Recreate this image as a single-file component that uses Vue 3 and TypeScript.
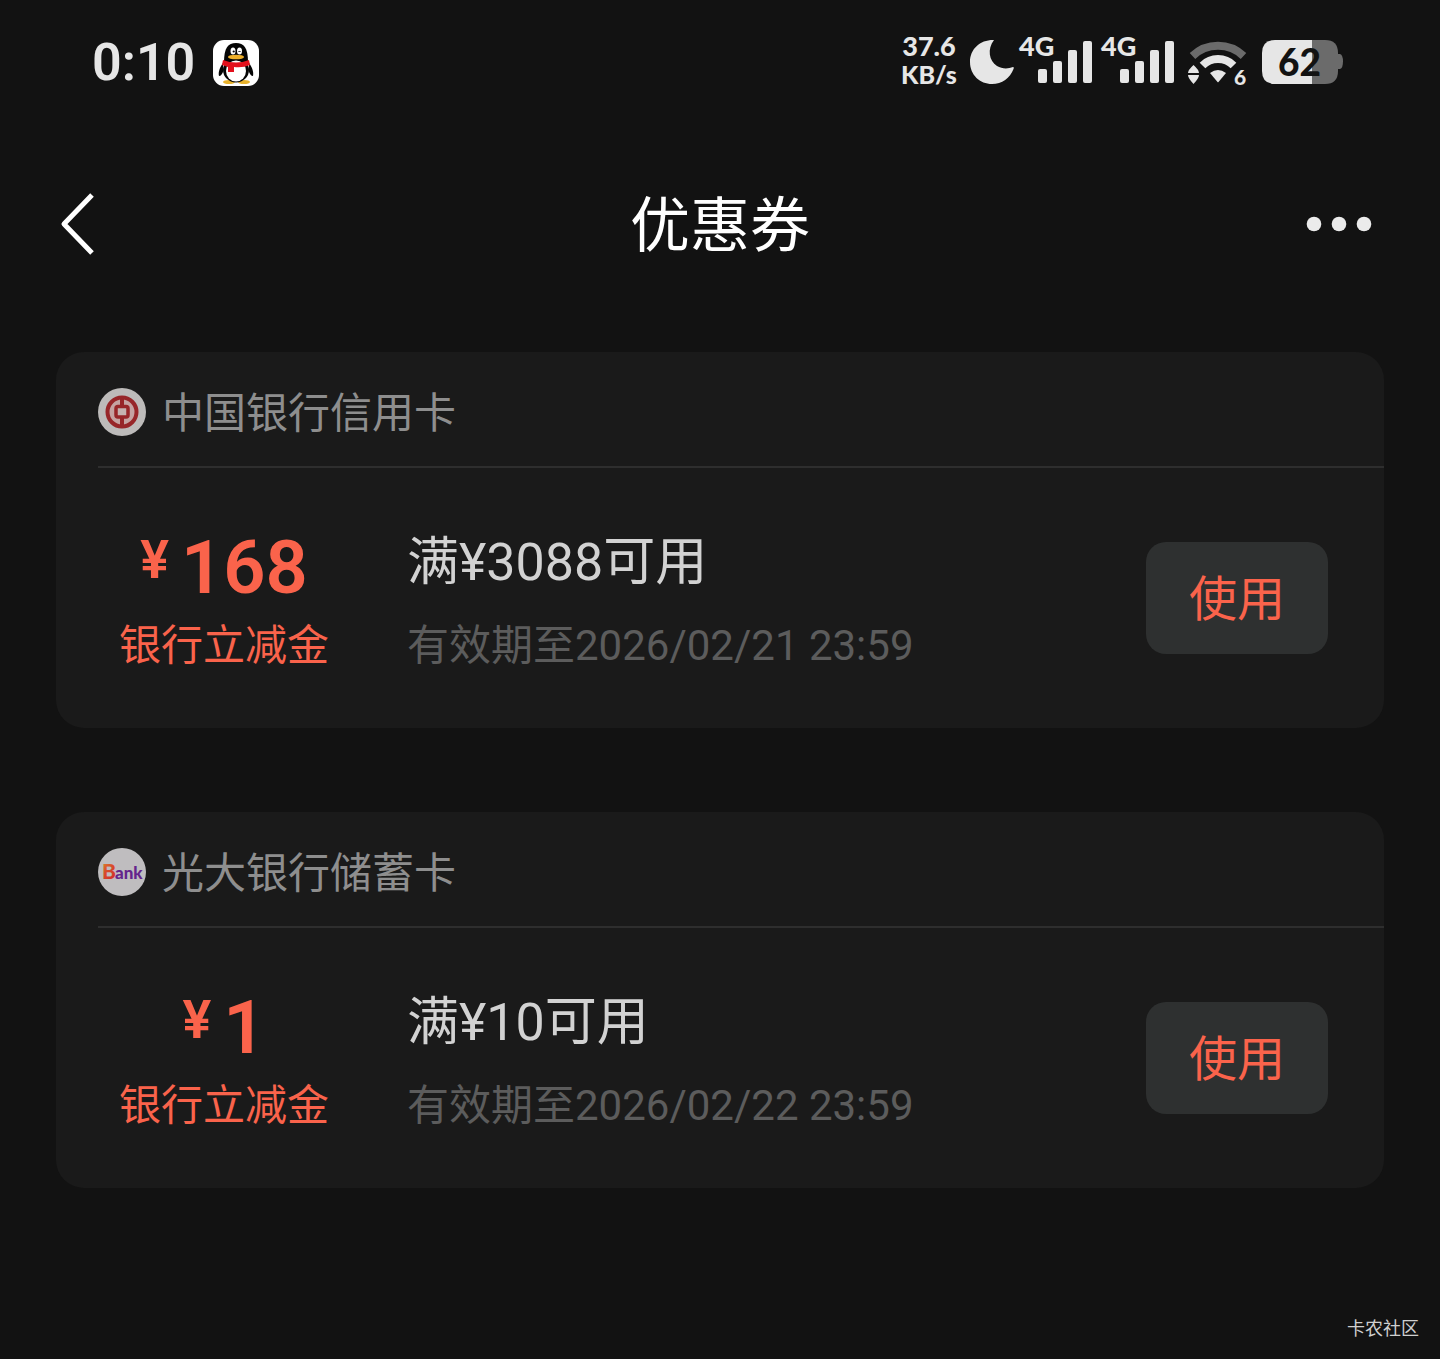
<script setup lang="ts">
interface Coupon {
  bank: 'boc' | 'ceb'
  card: string
  amount: string
  kind: string
  rule: string
  expiry: string
}

const coupons: Coupon[] = [
  {
    bank: 'boc',
    card: '中国银行信用卡',
    amount: '168',
    kind: '银行立减金',
    rule: '满¥3088可用',
    expiry: '有效期至2026/02/21 23:59',
  },
  {
    bank: 'ceb',
    card: '光大银行储蓄卡',
    amount: '1',
    kind: '银行立减金',
    rule: '满¥10可用',
    expiry: '有效期至2026/02/22 23:59',
  },
]

const sims = [1, 2]
</script>

<template>
  <div class="page">
    <div class="status">
      <div class="status-left">
        <span class="time">0:10</span>
        <svg class="qq" width="46" height="46" viewBox="0 0 46 46" aria-hidden="true">
          <rect width="46" height="46" rx="11" fill="#fff" />
          <ellipse cx="16" cy="42" rx="6" ry="2" fill="#e8b22c" />
          <ellipse cx="31" cy="42" rx="6" ry="2" fill="#e8b22c" />
          <path d="M10 23C7 27 5 32 6 36C8 36 9 34 10 32ZM36 23C39 27 41 32 40 36C38 36 37 34 36 32Z" fill="#050505" />
          <ellipse cx="23" cy="30" rx="13" ry="12.500" fill="#050505" />
          <path d="M11 22C11 8 15 3 23 3S35 8 35 22Z" fill="#050505" />
          <ellipse cx="23" cy="31" rx="10" ry="10.500" fill="#fff" />
          <path d="M10 20Q23 25 36 20L37 25Q30 28 21 27L21 32L15 32L15 27L9 25Z" fill="#e3101c" />
          <ellipse cx="20" cy="11" rx="2.500" ry="3.500" fill="#fff" />
          <ellipse cx="26.500" cy="11" rx="2.500" ry="3.500" fill="#fff" />
          <circle cx="20.700" cy="11.500" r="1.100" fill="#050505" />
          <path d="M25.500 12Q26.500 10 27.500 12" stroke="#050505" fill="none" />
          <ellipse cx="23" cy="17" rx="8" ry="2.300" fill="#eeb02a" />
        </svg>
      </div>
      <div class="status-right">
        <div class="speed">
          <span class="speed-value">37.6</span>
          <span class="speed-unit">KB/s</span>
        </div>
        <svg class="moon" width="44" height="52" viewBox="0 0 44 52" aria-hidden="true">
          <path d="M24 4C17 13 19 25 27 30C32 33 38 33 43 31C44 31 44 32 43.500 33C40 42 32 48 22 48C10 48 0 39 0 26C0 13 10 4 23 4Z" fill="#e6e6e6" />
        </svg>
        <svg v-for="sim in sims" :key="sim" class="signal" width="76" height="52" viewBox="0 0 76 52" fill="#e6e6e6" aria-hidden="true">
          <text x="1" y="20" class="net">4G</text>
          <rect x="20" y="33" width="9" height="14" rx="2" />
          <rect x="35" y="25" width="9" height="22" rx="2" />
          <rect x="50" y="14" width="9" height="33" rx="2" />
          <rect x="65" y="5" width="9" height="42" rx="2" />
        </svg>
        <svg class="wifi" width="60" height="52" viewBox="0 0 60 52" aria-hidden="true">
          <path d="M4.500 20A37 37 0 0 1 55.500 20" fill="none" stroke="#6b6b6b" stroke-width="8" />
          <path d="M14.500 29.500A22 22 0 0 1 45.500 29.500" fill="none" stroke="#e6e6e6" stroke-width="8" />
          <path d="M22 37Q30 31 38 37L30.500 46Q30 46.500 29.500 46Z" fill="#e6e6e6" />
          <path d="M5.500 29Q11 34 11 37H0Q0 34 5.500 29ZM0 39H11Q11 42 5.500 48Q0 42 0 39Z" fill="#e6e6e6" />
          <text x="46" y="49" class="wifi-gen">6</text>
        </svg>
        <svg class="battery" width="81" height="52" viewBox="0 0 81 52" aria-hidden="true">
          <path d="M74 18H78Q81 19 81 25.500T78 33H74Z" fill="#6b6b6b" />
          <path d="M50 4H63Q76 4 76 17V35Q76 48 63 48H50Z" fill="#6b6b6b" />
          <path d="M50 4H13Q0 4 0 17V35Q0 48 13 48H50Z" fill="#e6e6e6" />
          <text x="16" y="40" class="level">62</text>
        </svg>
      </div>
    </div>

    <header class="nav">
      <button class="icon-button" type="button" aria-label="返回">
        <svg width="40" height="64" viewBox="0 0 40 64" fill="none" stroke="#fff" stroke-width="5">
          <path d="M36 3L8 32L36 61" stroke-linejoin="round" />
        </svg>
      </button>
      <h1 class="title">优惠券</h1>
      <button class="icon-button more" type="button" aria-label="更多">
        <svg width="66" height="16" viewBox="0 0 66 16" fill="#ebebeb">
          <circle cx="8" cy="8" r="7.300" />
          <circle cx="33" cy="8" r="7.300" />
          <circle cx="58" cy="8" r="7.300" />
        </svg>
      </button>
    </header>

    <main class="list">
      <article v-for="coupon in coupons" :key="coupon.card" class="card">
        <div class="card-head">
          <svg v-if="coupon.bank === 'boc'" width="48" height="48" viewBox="0 0 48 48" aria-hidden="true">
            <circle cx="24" cy="24" r="24" fill="#bdbbba" />
            <circle cx="24" cy="24" r="14.500" fill="#c5a3a2" stroke="#972629" stroke-width="4" />
            <path d="M24 9V18M24 30V39" stroke="#972629" stroke-width="4" />
            <rect x="18" y="18.500" width="12" height="10.500" rx="2" fill="#c5b3b1" stroke="#972629" stroke-width="3.500" />
          </svg>
          <svg v-else width="48" height="48" viewBox="0 0 48 48" aria-hidden="true">
            <defs>
              <linearGradient id="ceb-flame" x1="0" y1="0" x2="0.500" y2="1">
                <stop offset="0" stop-color="#e0962e" />
                <stop offset="0.500" stop-color="#d8502c" />
                <stop offset="1" stop-color="#d2302c" />
              </linearGradient>
            </defs>
            <circle cx="24" cy="24" r="24" fill="#bfbdbf" />
            <text x="4" y="31" class="ceb-b" fill="url(#ceb-flame)">B</text>
            <text x="17" y="31" class="ceb-ank">ank</text>
          </svg>
          <span class="card-name">{{ coupon.card }}</span>
        </div>
        <div class="card-body">
          <div class="worth">
            <div class="amount">
              <span class="yen">¥</span>
              <span class="digits">{{ coupon.amount }}</span>
            </div>
            <span class="kind">{{ coupon.kind }}</span>
          </div>
          <div class="terms">
            <h2 class="rule">{{ coupon.rule }}</h2>
            <p class="expiry">{{ coupon.expiry }}</p>
          </div>
          <button class="use" type="button">使用</button>
        </div>
      </article>
    </main>

    <footer class="credit">卡农社区</footer>
  </div>
</template>

<style>
body {
  margin: 0;
  background: #121212;
}
</style>

<style scoped>
.page {
  display: flex;
  flex-direction: column;
  box-sizing: border-box;
  min-height: 100vh;
  background: #121212;
  color: #d2d2d2;
  font-family: Lato, "Noto Sans CJK SC", sans-serif;
}

svg {
  display: block;
  flex: none;
}

.status {
  display: flex;
  align-items: center;
  justify-content: space-between;
  height: 124px;
  padding: 0 97px 0 92px;
  color: #e6e6e6;
}

.status-left {
  display: flex;
  align-items: center;
  gap: 18px;
  padding-top: 2px;
}

.time {
  font-family: Roboto, sans-serif;
  font-size: 52px;
  font-weight: 600;
  line-height: 60px;
}

.status-right {
  display: flex;
  align-items: center;
}

.speed {
  display: flex;
  flex-direction: column;
  align-items: center;
  width: 58px;
  padding-bottom: 4px;
  font-weight: 900;
  line-height: 28px;
}

.speed-value {
  font-size: 27px;
}

.speed-unit {
  font-size: 25px;
}

.moon {
  margin: 0 4px 0 12px;
}

.signal {
  margin-right: 6px;
  overflow: visible;
}

.net {
  font: 900 27px Lato, sans-serif;
}

.wifi {
  margin: 0 14px 0 6px;
  overflow: visible;
}

.wifi-gen {
  font: 900 21px Lato, sans-serif;
  fill: #e6e6e6;
}

.level {
  font: 900 37px Lato, sans-serif;
  fill: #121212;
}

.nav {
  display: grid;
  grid-template-columns: 1fr auto 1fr;
  align-items: center;
  height: 200px;
  padding: 0 56px;
}

.icon-button {
  display: flex;
  align-items: center;
  width: 66px;
  height: 80px;
  padding: 0;
  border: 0;
  background: none;
}

.more {
  justify-self: end;
  margin-right: 12px;
}

.title {
  margin: 0;
  color: #fff;
  font-size: 60px;
  font-weight: 400;
  line-height: 80px;
}

.list {
  display: flex;
  flex-direction: column;
  gap: 84px;
  padding: 28px 56px 84px;
}

.card {
  border-radius: 28px;
  background: #1a1a1a;
}

.card-head {
  display: flex;
  align-items: center;
  gap: 16px;
  height: 108px;
  margin-left: 42px;
  padding-top: 6px;
  border-bottom: 2px solid #2e2e2e;
}

.card-name {
  color: #8e8e8e;
  font-size: 42px;
  line-height: 56px;
}

.card-body {
  display: flex;
  align-items: center;
  height: 260px;
  padding-right: 56px;
}

.worth {
  display: flex;
  flex-direction: column;
  align-items: center;
  width: 336px;
  color: #fa634b;
}

.amount {
  display: flex;
  align-items: flex-start;
  gap: 12px;
  height: 92px;
  font-family: Roboto, sans-serif;
  font-weight: 600;
}

.yen {
  font-size: 54px;
  line-height: 72px;
}

.digits {
  font-size: 74px;
  line-height: 88px;
}

.kind {
  font-size: 42px;
  line-height: 56px;
}

.terms {
  flex: 1;
  padding: 4px 0 0 15px;
  font-family: Roboto, "Noto Sans CJK SC", sans-serif;
}

.rule {
  margin: 0 0 18px;
  font-size: 52px;
  font-weight: 400;
  line-height: 74px;
}

.expiry {
  margin: 0;
  color: #5c5c5c;
  font-size: 42px;
  line-height: 56px;
}

.use {
  width: 182px;
  height: 112px;
  padding: 0;
  border: 0;
  border-radius: 20px;
  background: #2e3030;
  color: #fa634b;
  font: 400 48px/64px Lato, "Noto Sans CJK SC", sans-serif;
}

.credit {
  margin-top: auto;
  padding: 0 21px 18px;
  color: #cfcfcf;
  font-size: 18px;
  line-height: 26px;
  text-align: right;
}

.ceb-b {
  font: 900 21px Lato, sans-serif;
}

.ceb-ank {
  font: 900 17px Lato, sans-serif;
  fill: #64248c;
}
</style>
